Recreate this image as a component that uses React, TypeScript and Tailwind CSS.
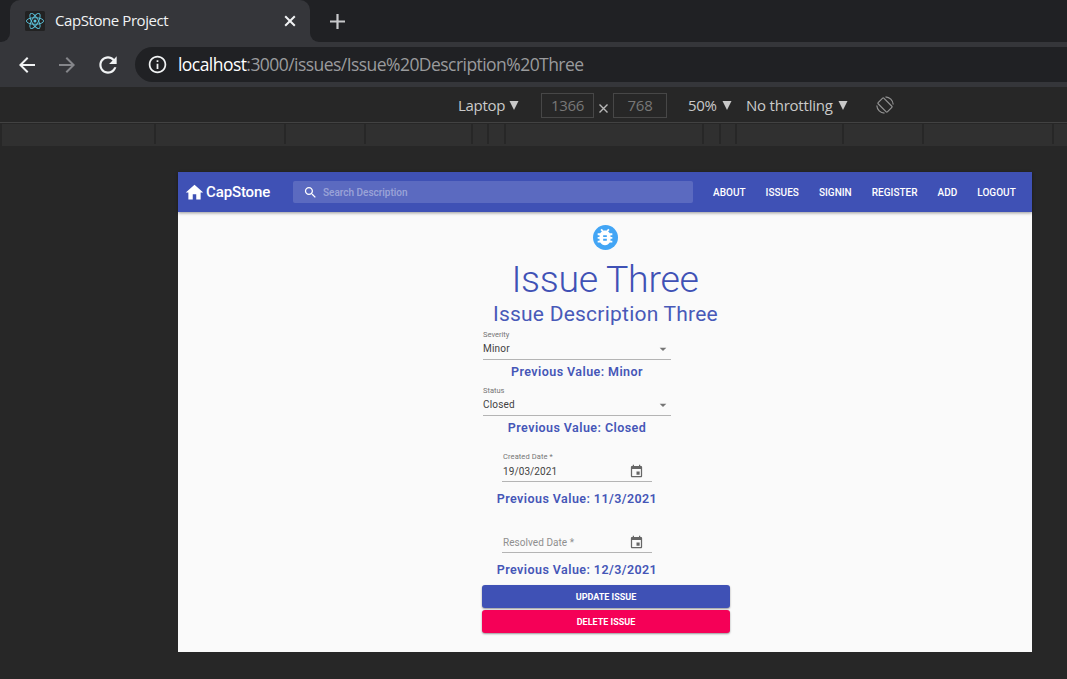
import React from "react";

const icons = {
  home: "M10 20v-6h4v6h5v-8h3L12 3 2 12h3v8z",
  search:
    "M15.5 14h-.79l-.28-.27C15.41 12.59 16 11.11 16 9.5 16 5.91 13.09 3 9.5 3S3 5.91 3 9.5 5.91 16 9.5 16c1.61 0 3.09-.59 4.23-1.57l.27.28v.79l5 4.99L20.49 19l-4.99-5zm-6 0C7.01 14 5 11.99 5 9.5S7.01 5 9.5 5 14 7.01 14 9.5 11.99 14 9.5 14z",
  bug: "M20 8h-2.81c-.45-.78-1.07-1.45-1.82-1.96L17 4.41 15.59 3l-2.17 2.17C12.96 5.06 12.49 5 12 5c-.49 0-.96.06-1.41.17L8.41 3 7 4.41l1.62 1.63C7.88 6.55 7.26 7.22 6.81 8H4v2h2.09c-.05.33-.09.66-.09 1v1H4v2h2v1c0 .34.04.67.09 1H4v2h2.81c1.04 1.79 2.97 3 5.19 3s4.15-1.21 5.19-3H20v-2h-2.09c.05-.33.09-.66.09-1v-1h2v-2h-2v-1c0-.34-.04-.67-.09-1H20V8zm-6 8h-4v-2h4v2zm0-4h-4v-2h4v2z",
  event:
    "M17 12h-5v5h5v-5zM16 1v2H8V1H6v2H5c-1.11 0-1.99.9-1.99 2L3 19c0 1.1.89 2 2 2h14c1.1 0 2-.9 2-2V5c0-1.1-.9-2-2-2h-1V1h-2zm3 18H5V8h14v11z",
  drop: "M7 10l5 5 5-5z",
  back: "M20 11H7.83l5.59-5.59L12 4l-8 8 8 8 1.41-1.41L7.83 13H20v-2z",
  forward: "M4 11h12.17l-5.59-5.59L12 4l8 8-8 8-1.41-1.41L16.17 13H4v-2z",
  reload:
    "M17.65 6.35C16.2 4.9 14.21 4 12 4c-4.42 0-7.99 3.58-7.99 8s3.57 8 7.99 8c3.73 0 6.84-2.55 7.73-6h-2.08c-.82 2.33-3.04 4-5.65 4-3.31 0-6-2.69-6-6s2.69-6 6-6c1.66 0 3.14.69 4.22 1.78L13 11h7V4l-2.35 2.35z",
  info: "M11 17h2v-6h-2v6zm1-15C6.48 2 2 6.48 2 12s4.48 10 10 10 10-4.48 10-10S17.52 2 12 2zm0 18c-4.41 0-8-3.59-8-8s3.59-8 8-8 8 3.59 8 8-3.59 8-8 8zM11 9h2V7h-2v2z",
};

function Icon({ name, className }: { name: keyof typeof icons; className: string }) {
  return (
    <svg viewBox="0 0 24 24" fill="currentColor" className={`shrink-0 ${className}`}>
      <path d={icons[name]} />
    </svg>
  );
}

function ReactLogo() {
  return (
    <svg viewBox="0 0 20 20" className="h-5 w-5 shrink-0" fill="none" stroke="#5cc5de" strokeWidth="0.9">
      <rect width="20" height="20" rx="1.5" fill="#222222" stroke="none" />
      <ellipse cx="10" cy="10" rx="8.6" ry="3.3" />
      <ellipse cx="10" cy="10" rx="8.6" ry="3.3" transform="rotate(60 10 10)" />
      <ellipse cx="10" cy="10" rx="8.6" ry="3.3" transform="rotate(120 10 10)" />
      <circle cx="10" cy="10" r="1.5" fill="#5cc5de" stroke="none" />
    </svg>
  );
}

function TabStrip() {
  return (
    <div className="flex h-[42px] shrink-0 bg-[#35363a]">
      <div className="w-[10px] rounded-br-[9px] bg-[#202124]" />
      <div className="w-[300px] bg-[#202124]">
        <div className="flex h-[42px] items-center rounded-t-[10px] bg-[#35363a] pl-[15px]">
          <ReactLogo />
          <span className="ml-[10px] w-[220px] pb-[2px] text-[15px] leading-[20px] tracking-[-0.42px] whitespace-nowrap text-[#f1f3f4]">
            CapStone Project
          </span>
          <svg viewBox="0 0 12 12" className="ml-[9px] h-3 w-3" stroke="#f1f3f4" strokeWidth="2">
            <path d="M1.2 1.2l9.6 9.6M10.8 1.2l-9.6 9.6" />
          </svg>
        </div>
      </div>
      <div className="flex flex-1 items-center rounded-bl-[9px] bg-[#202124] pl-[20px]">
        <svg viewBox="0 0 15 15" className="h-[15px] w-[15px]" stroke="#c8c9cb" strokeWidth="2.2">
          <path d="M7.5 0v15M0 7.5h15" />
        </svg>
      </div>
    </div>
  );
}

function AddressBar() {
  return (
    <div className="flex h-[45px] shrink-0 items-center bg-[#35363a] pl-[15px] text-[#f1f3f4]">
      <Icon name="back" className="h-6 w-6" />
      <Icon name="forward" className="ml-4 h-6 w-6 text-[#85868a]" />
      <Icon name="reload" className="ml-[16px] h-[26px] w-[26px]" />
      <div className="ml-[14px] flex h-[35px] flex-1 items-center rounded-l-full bg-[#202124] pl-[12px]">
        <Icon name="info" className="h-[21px] w-[21px]" />
        <span className="ml-[10px] pb-px text-[17.5px] leading-[24px] tracking-[-0.55px] whitespace-nowrap text-[#9a9b9d]">
          <span className="text-white">localhost</span>:3000/issues/Issue%20Description%20Three
        </span>
      </div>
    </div>
  );
}

function Caret({ className }: { className: string }) {
  return (
    <svg viewBox="0 0 10 9" className={`h-[9px] w-[10px] shrink-0 ${className}`} fill="#c8c8c8">
      <path d="M0.5 0h9L5 9z" />
    </svg>
  );
}

function DeviceBar() {
  return (
    <div className="flex h-[36px] shrink-0 items-center border-b border-[#424242] bg-[#272727] pt-px pl-[458px] text-[15px] leading-[20px] whitespace-nowrap text-[#cacaca]">
      <span className="w-[47px] pb-px tracking-[-0.3px]">Laptop</span>
      <Caret className="ml-[4px]" />
      <div className="ml-[22px] flex h-[25px] w-[53px] items-center justify-center border border-[#474747] pb-px tracking-[-0.3px] text-[#777777]">
        1366
      </div>
      <svg viewBox="0 0 9 9" className="mt-[6px] ml-[5px] h-[9px] w-[9px]" stroke="#b8b8b8" strokeWidth="1.4">
        <path d="M.5.5l8 8M8.5.5l-8 8" />
      </svg>
      <div className="ml-[5px] flex h-[25px] w-[54px] items-center justify-center border border-[#474747] pb-px tracking-[-0.3px] text-[#777777]">
        768
      </div>
      <span className="ml-[21px] w-[29px] pb-px tracking-[-0.3px]">50%</span>
      <Caret className="ml-[5px]" />
      <span className="ml-[14px] w-[88px] pb-px tracking-[-0.22px]">No throttling</span>
      <Caret className="ml-[4px]" />
      <svg viewBox="0 0 18 18" className="ml-[28px] h-[18px] w-[18px] shrink-0" fill="none" stroke="#929292" strokeWidth="1.2">
        <rect x="5" y="2.5" width="8" height="13" rx="0.8" transform="rotate(-45 9 9)" />
        <path d="M9.5.8a8.2 8.2 0 0 1 7.7 7.7M8.5 17.2A8.2 8.2 0 0 1 .8 9.5" />
      </svg>
    </div>
  );
}

function Ruler() {
  const widths = [152, 128, 78, 105, 14, 15, 196, 15, 14, 105, 78, 128, 13];
  return (
    <div className="ml-[2px] flex h-[23px] shrink-0 flex-col bg-[#272727] pt-px">
      <div className="flex h-[20px] gap-[2px] overflow-hidden">
        {widths.map((width, i) => (
          <div key={i} className="h-full shrink-0 bg-[#303030]" style={{ width }} />
        ))}
      </div>
      <div className="h-[2px] bg-[#303030]" />
    </div>
  );
}

function Navbar() {
  return (
    <nav className="flex h-[40px] shrink-0 items-center bg-[#3f51b5] pl-[6px] text-white shadow-[0_1px_3px_rgba(0,0,0,0.4)]">
      <Icon name="home" className="h-[21px] w-[21px]" />
      <span className="ml-[1px] w-[87px] text-[15px] leading-[20px] font-medium tracking-[-0.12px]">CapStone</span>
      <div className="flex h-[22px] w-[400px] items-center rounded-[2px] bg-white/15 pl-[10px]">
        <Icon name="search" className="h-[15px] w-[15px]" />
        <span className="ml-[5px] pt-[2px] text-[10px] leading-[14px] font-medium text-white/40">Search Description</span>
      </div>
      <div className="ml-[20px] flex gap-[20px] pt-[2px] text-[10px] leading-[14px] font-medium tracking-[0.02px]">
        <a>ABOUT</a>
        <a>ISSUES</a>
        <a>SIGNIN</a>
        <a>REGISTER</a>
        <a>ADD</a>
        <a>LOGOUT</a>
      </div>
    </nav>
  );
}

function Previous({ value }: { value: string }) {
  return (
    <div className="h-[20px] text-center text-[12.5px] leading-[20px] font-semibold tracking-[0.43px] whitespace-nowrap text-[#4556b7]">
      Previous Value: {value}
    </div>
  );
}

function SelectField({ label, value }: { label: string; value: string }) {
  return (
    <div className="h-[56px]">
      <div className="mr-px ml-px h-[31px] border-b border-[#b4b4b4]">
        <div className="h-[11px] text-[7.5px] leading-[11px] text-[#757575]">{label}</div>
        <div className="flex h-[18px] items-center justify-between text-[10px] leading-[18px] tracking-[0.2px] text-[#424242]">
          <span>{value}</span>
          <Icon name="drop" className="h-[16px] w-[16px] text-[#757575]" />
        </div>
      </div>
      <div className="mt-[2px]">
        <Previous value={value} />
      </div>
    </div>
  );
}

function DateField({ label, value, previous }: { label: string; value?: string; previous: string }) {
  return (
    <div className="h-[71px]">
      <div className="mx-[20px] h-[31px] border-b border-[#b4b4b4]">
        <div className="h-[11px] pl-px text-[7.5px] leading-[11px] tracking-[0.1px] text-[#757575]">{value ? label : ""}</div>
        <div className="flex h-[19px] items-center justify-between pr-[8px] pl-px">
          <span
            className={
              value
                ? "text-[10px] leading-[19px] tracking-[0.1px] text-[#424242]"
                : "text-[10px] leading-[19px] tracking-[0.05px] text-[#8f8f8f]"
            }
          >
            {value ?? label}
          </span>
          <Icon name="event" className="h-[15px] w-[15px] text-[#666666]" />
        </div>
      </div>
      <div className="mt-[7px]">
        <Previous value={previous} />
      </div>
    </div>
  );
}

function IssuePage() {
  return (
    <main className="mt-[26px] ml-[178px] flex h-[480px] w-[854px] flex-col bg-[#fafafa] font-['Roboto',sans-serif]">
      <Navbar />
      <div className="flex flex-col items-center pt-[12px]">
        <div className="flex h-[26px] w-[26px] items-center justify-center">
          <div className="flex h-[25px] w-[25px] items-center justify-center rounded-full bg-[#42a5f5]">
            <Icon name="bug" className="h-[22px] w-[22px] text-white" />
          </div>
        </div>
        <h1 className="mt-[7px] h-[44px] text-[37.5px] leading-[45px] font-light tracking-[-0.3px] text-[#3f51b5]">Issue Three</h1>
        <h2 className="h-[25px] pl-px text-[21px] leading-[26px] tracking-[0.23px] text-[#4859b8]">Issue Description Three</h2>
        <form className="mt-[3px] ml-[2px] w-[248px]">
          <div className="w-[190px]">
            <SelectField label="Severity" value="Minor" />
            <SelectField label="Status" value="Closed" />
            <div className="mt-[10px]">
              <DateField label="Created Date *" value="19/03/2021" previous="11/3/2021" />
              <DateField label="Resolved Date *" previous="12/3/2021" />
            </div>
          </div>
          <div className="-mt-[8px] flex flex-col gap-[2px] text-[9px] leading-[22px] font-bold text-white">
            <button type="button" className="h-[23px] rounded-[3px] bg-[#3f51b5] pt-px shadow-[0_1px_2px_rgba(0,0,0,0.4)]">
              UPDATE ISSUE
            </button>
            <button type="button" className="h-[23px] rounded-[3px] bg-[#f50057] pt-px shadow-[0_1px_2px_rgba(0,0,0,0.4)]">
              DELETE ISSUE
            </button>
          </div>
        </form>
      </div>
    </main>
  );
}

export default function App() {
  return (
    <div className="flex h-[679px] w-[1067px] flex-col overflow-hidden bg-[#272727] font-['Open_Sans',sans-serif]">
      <TabStrip />
      <AddressBar />
      <DeviceBar />
      <Ruler />
      <IssuePage />
    </div>
  );
}
